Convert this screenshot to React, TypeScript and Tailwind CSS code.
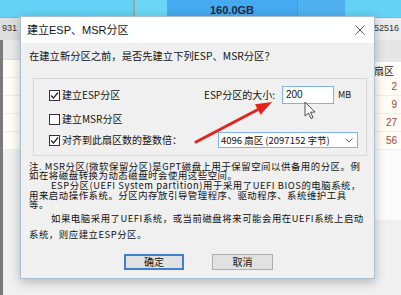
const cjk = "font-['Noto_Sans_CJK_SC','Liberation_Sans',sans-serif]";

function Check({ on }: { on: boolean }) {
  return (
    <span className="flex h-[11px] w-[11px] shrink-0 items-center justify-center border border-[#333] bg-white">
      {on && (
        <svg width="9" height="9" viewBox="0 0 9 9">
          <path d="M1 4.5 L3.5 7 L8 1.5" fill="none" stroke="#222" strokeWidth="1.2" />
        </svg>
      )}
    </span>
  );
}

export default function App() {
  return (
    <div className={`relative h-[295px] w-[401px] overflow-hidden bg-[#f0f0f0] ${cjk}`}>
      {/* background app: disk map + partition table */}
      <div className="flex h-full flex-col">
        <div className="flex h-[17px]">
          <div className="w-[133px] bg-[#63d2f4]" />
          <div className="w-[2px] bg-[#9aa79a]" />
          <div className="w-[32px] bg-[#6dd6f6]" />
          <div className="flex w-[130px] items-end justify-center bg-[#46aaf0] pb-px text-[11px] font-bold leading-[12px] text-[#1b2a45] [font-family:'Liberation_Sans',sans-serif]">
            160.0GB
          </div>
          <div className="w-px bg-[#7d8a8f]" />
          <div className="w-[47px] bg-[#4fb1f1]" />
          <div className="flex-1 bg-[#63d2f4]" />
        </div>
        <div className="h-px bg-[#a8a8a8]" />
        <div className="flex h-[22px] items-center justify-between bg-[#ececec] text-[9px] text-[#333] [font-family:'Liberation_Sans',sans-serif]">
          <span className="flex h-full w-[20px] items-center bg-[#dedede] pl-[2px]">931</span>
          <span className="pr-[2px]">352516</span>
        </div>
        <div className="flex flex-1">
          <div className="flex w-[20px] flex-col border-l-[3px] border-[#7a7a7a] bg-white">
            <div className="h-[20px] border-b border-[#dcdcdc] bg-[#e9e9e9]" />
            <div className="h-[18px] border-b border-[#f0efe4] bg-[#fffef6]" />
            <div className="h-[18px] border-b border-[#f0efe4] bg-[#fffef6]" />
            <div className="h-[18px] border-b border-[#f0efe4] bg-[#fffef6]" />
            <div className="h-[18px] border-b border-[#f0efe4] bg-[#fffef6]" />
            <div className="h-[18px] border-b border-[#f0efe4] bg-[#fffef6]" />
            <div className="flex-1 bg-[#f0f0f0]" />
          </div>
          <div className="flex-1" />
          <div className="flex w-[33px] flex-col text-[10px] text-[#a0453a]">
            <div className="h-[22px] bg-[#e6e6e6]" />
            <div className="flex h-[16px] items-center bg-white pl-[6px] text-[10px] text-[#222]">扇区</div>
            {["2", "9", "27", "56"].map((n) => (
              <div
                key={n}
                className="flex h-[18px] items-center justify-end border-b border-[#f1efe4] bg-[#fffdf5] pr-[4px] [font-family:'Liberation_Sans',sans-serif]"
              >
                {n}
              </div>
            ))}
            <div className="h-[70px] bg-[#fbfbfb]" />
            <div className="flex-1 bg-[#f0f0f0]" />
          </div>
        </div>
      </div>

      {/* dialog */}
      <div className="absolute left-[20px] top-[16px] flex h-[263px] w-[355px] flex-col border border-[#a9bfd6] bg-[#f0f0f0] shadow-[0_3px_10px_rgba(0,0,0,0.25)]">
        <div className="flex h-[26px] items-center justify-between bg-white pl-[6px] pr-[9px]">
          <span className="text-[11px] text-[#111] [font-family:'Liberation_Sans','Noto_Sans_CJK_SC',sans-serif]">建立ESP、MSR分区</span>
          <svg width="10" height="10" viewBox="0 0 10 10">
            <path d="M0.5 0.5 L9.5 9.5 M9.5 0.5 L0.5 9.5" stroke="#555" strokeWidth="1" />
          </svg>
        </div>

        <div className="relative flex flex-1 flex-col text-[10px] leading-[10px] text-[#111]">
          <div className="ml-[8px] mt-[8px] h-[10px] text-[10.3px]">在建立新分区之前，是否先建立下列ESP、MSR分区？</div>

          <div className="ml-[12px] mt-[17px] flex h-[78px] w-[334px] flex-col border border-[#d6d6d6] pl-[15px] pt-[7px]">
            <div className="flex h-[18px] items-center">
              <div className="flex w-[155px] items-center gap-[2px]">
                <Check on />
                <span>建立ESP分区</span>
              </div>
              <span className="w-[78px]">ESP分区的大小:</span>
              <div className="flex h-[18px] w-[52px] items-center border border-[#7eb4ea] bg-white pl-[3px] [font-family:'Liberation_Sans',sans-serif]">
                200
              </div>
              <span className="ml-[4px] text-[9px]">MB</span>
            </div>
            <div className="mt-[9px] flex h-[12px] items-center gap-[2px]">
              <Check on={false} />
              <span>建立MSR分区</span>
            </div>
            <div className="mt-[7px] flex h-[16px] items-center">
              <div className="flex w-[169px] items-center gap-[2px]">
                <Check on />
                <span>对齐到此扇区数的整数倍：</span>
              </div>
              <div className="flex h-[16px] w-[140px] items-center justify-between border border-[#7eb4ea] bg-white pl-[2px] pr-[4px]">
                <span className="text-[9.5px]">4096 扇区 (2097152 字节)</span>
                <svg width="8" height="5" viewBox="0 0 8 5">
                  <path d="M0.5 0.5 L4 4 L7.5 0.5" fill="none" stroke="#666" strokeWidth="1" />
                </svg>
              </div>
            </div>
          </div>

          <div className="ml-[8px] mt-[6px] flex flex-col text-[9.4px] leading-[9px] tracking-[0.55px]">
            <div className="h-[9px]">注. MSR分区(微软保留分区)是GPT磁盘上用于保留空间以供备用的分区。例</div>
            <div className="h-[10px]">如在将磁盘转换为动态磁盘时会使用这些空间。</div>
            <div className="h-[9.5px] pl-[22px]">ESP分区(UEFI System partition)用于采用了UEFI BIOS的电脑系统，</div>
            <div className="h-[9px]">用来启动操作系统。分区内存放引导管理程序、驱动程序、系统维护工具</div>
            <div className="h-[14.5px]">等。</div>
            <div className="h-[16px] pl-[22px]">如果电脑采用了UEFI系统，或当前磁盘将来可能会用在UEFI系统上启动</div>
            <div className="h-[10px]">系统，则应建立ESP分区。</div>
          </div>

          <div className="ml-[103px] mt-[14px] flex gap-[28px]">
            <button className="flex h-[16px] w-[60px] items-center justify-center border-2 border-[#3f7fcf] bg-[#e1e1e1] text-[10px]">
              确定
            </button>
            <button className="flex h-[16px] w-[61px] items-center justify-center border border-[#adadad] bg-[#e1e1e1] text-[10px]">
              取消
            </button>
          </div>

          {/* red annotation arrow + mouse pointer */}
          <svg className="pointer-events-none absolute left-0 top-0" width="355" height="237" viewBox="0 0 355 237">
            <line x1="175" y1="99" x2="237" y2="66.5" stroke="#e5231c" strokeWidth="3" strokeLinecap="round" />
            <polygon points="251,59 239.6,71.8 234,61.2" fill="#e5231c" />
            <path d="M284 59 L284 73 L287.5 70 L290 75.5 L292 74.5 L289.5 69.2 L294 69 Z" fill="#fff" stroke="#222" strokeWidth="0.8" />
          </svg>
        </div>
      </div>
    </div>
  );
}
